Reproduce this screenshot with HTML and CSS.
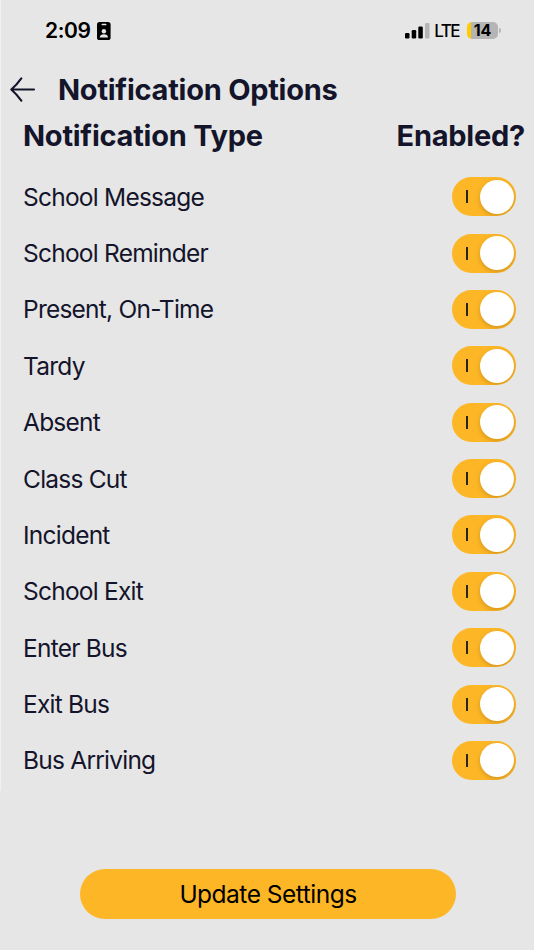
FILE: index.html
```html
<!DOCTYPE html>
<html lang="en">

    <head>
        <meta charset="UTF-8">
        <meta name="viewport" content="width=device-width, initial-scale=1.0">
        <title>Notification Options</title>

        <link rel="stylesheet" href="styles.css">
    </head>

    <body>
        <div class="screen">
            <div class="status-bar">
                <div class="status-left">
                    <span class="time">2:09</span>
                    <svg class="badge-icon" width="14" height="18" viewBox="0 0 14 18">
                        <rect width="13.6" height="18" rx="2.6" fill="#000"/>
                        <rect x="4.5" y="1.8" width="5" height="1.4" rx="0.7" fill="#e6e6e6"/>
                        <circle cx="6.9" cy="9.2" r="2.2" fill="#e6e6e6"/>
                        <path d="M2.8 15.6C2.8 13.2 4.6 12.3 6.9 12.3S11 13.2 11 15.6Z" fill="#e6e6e6"/>
                    </svg>
                </div>
                <div class="status-right">
                    <svg class="signal-icon" width="25" height="16" viewBox="0 0 25 16">
                        <rect x="0" y="10" width="4.5" height="5.5" rx="1.2" fill="#000"/>
                        <rect x="6.7" y="7" width="4.5" height="8.5" rx="1.2" fill="#000"/>
                        <rect x="13.3" y="3.6" width="4.5" height="11.9" rx="1.2" fill="#000"/>
                        <rect x="20" y="0" width="4.5" height="15.5" rx="1.2" fill="#b5b5b5"/>
                    </svg>
                    <span class="network">LTE</span>
                    <div class="battery">14</div>
                    <div class="battery-tip"></div>
                </div>
            </div>

            <header class="header">
                <button class="back" aria-label="Back">
                    <svg width="26" height="26" viewBox="0 0 26 26" fill="none" stroke="#14142b" stroke-width="2.1" stroke-linecap="round" stroke-linejoin="round">
                        <path d="M24 12.5H1.5M11.3 1.3Q6.5 8 1.3 12.5Q6.5 17 11.3 23.7"/>
                    </svg>
                </button>
                <h1>Notification Options</h1>
            </header>

            <div class="columns">
                <h2>Notification Type</h2>
                <h2>Enabled?</h2>
            </div>

            <ul class="options">
                <li><span>School Message</span><button class="toggle" role="switch" aria-checked="true"></button></li>
                <li><span>School Reminder</span><button class="toggle" role="switch" aria-checked="true"></button></li>
                <li><span>Present, On-Time</span><button class="toggle" role="switch" aria-checked="true"></button></li>
                <li><span>Tardy</span><button class="toggle" role="switch" aria-checked="true"></button></li>
                <li><span>Absent</span><button class="toggle" role="switch" aria-checked="true"></button></li>
                <li><span>Class Cut</span><button class="toggle" role="switch" aria-checked="true"></button></li>
                <li><span>Incident</span><button class="toggle" role="switch" aria-checked="true"></button></li>
                <li><span>School Exit</span><button class="toggle" role="switch" aria-checked="true"></button></li>
                <li><span>Enter Bus</span><button class="toggle" role="switch" aria-checked="true"></button></li>
                <li><span>Exit Bus</span><button class="toggle" role="switch" aria-checked="true"></button></li>
                <li><span>Bus Arriving</span><button class="toggle" role="switch" aria-checked="true"></button></li>
            </ul>

            <button class="update">Update Settings</button>
        </div>
    </body>

</html>
```
FILE: styles.css
```css
* {
    margin: 0;
    padding: 0;
    box-sizing: border-box;
}

body {
    font-family: Inter, 'Liberation Sans', sans-serif;
    background: linear-gradient(#f1f1f1, #f1f1f1) no-repeat 0 0 / 1px 791px #e6e6e6;
    color: #14142b;
}

button {
    border: none;
    background: none;
    font-family: inherit;
    cursor: pointer;
}

.screen {
    display: flex;
    flex-direction: column;
    height: 950px;
}

.status-bar {
    display: flex;
    justify-content: space-between;
    align-items: center;
    height: 61px;
    padding: 0 33px 0 45px;
    color: #000;
}

.status-left,
.status-right {
    display: flex;
    align-items: center;
}

.time {
    font-size: 21px;
    font-weight: 600;
    letter-spacing: -0.4px;
}

.badge-icon {
    margin-left: 7px;
}

.network {
    margin-left: 4px;
    font-size: 17px;
    font-weight: 500;
    letter-spacing: -1.5px;
}

.battery {
    width: 31px;
    height: 17px;
    margin-left: 8px;
    border-radius: 5px;
    background: linear-gradient(to right, #ffcc00 4.5px, #b5b5b5 4.5px);
    font-size: 16px;
    font-weight: 700;
    line-height: 17px;
    text-align: center;
}

.battery-tip {
    width: 2px;
    height: 5px;
    margin-left: 1px;
    border-radius: 0 2px 2px 0;
    background-color: #b5b5b5;
}

.header {
    display: flex;
    align-items: center;
    height: 57px;
    padding-left: 10px;
}

.back {
    width: 26px;
    height: 26px;
    margin-right: 22px;
}

h1,
h2 {
    font-size: 29px;
    font-weight: 700;
    line-height: 36px;
    letter-spacing: -0.25px;
    white-space: nowrap;
}

.columns {
    display: flex;
    justify-content: space-between;
    height: 50.6px;
    padding: 0 9px 0 23px;
}

.options {
    list-style-type: none;
}

.options li {
    display: flex;
    justify-content: space-between;
    align-items: center;
    height: 56.36px;
    padding: 0 18px 0 23px;
    font-size: 24.5px;
    letter-spacing: -0.77px;
}

.toggle {
    display: flex;
    align-items: center;
    justify-content: space-between;
    width: 64px;
    height: 39px;
    padding: 0 2.5px 0 13.5px;
    border-radius: 20px;
    background-color: #fdb726;
    overflow: hidden;
}

.toggle::before {
    content: "";
    width: 2px;
    height: 13px;
    background-color: #2b2522;
}

.toggle::after {
    content: "";
    width: 34px;
    height: 34px;
    border-radius: 50%;
    background-color: #fff;
    box-shadow: 0 2px 5px rgba(120, 70, 0, 0.3);
}

.update {
    width: 376px;
    height: 50px;
    margin: 80.4px 0 0 80px;
    border-radius: 25px;
    background-color: #fdb726;
    color: #000;
    font-size: 24.5px;
    letter-spacing: -0.5px;
}
```
